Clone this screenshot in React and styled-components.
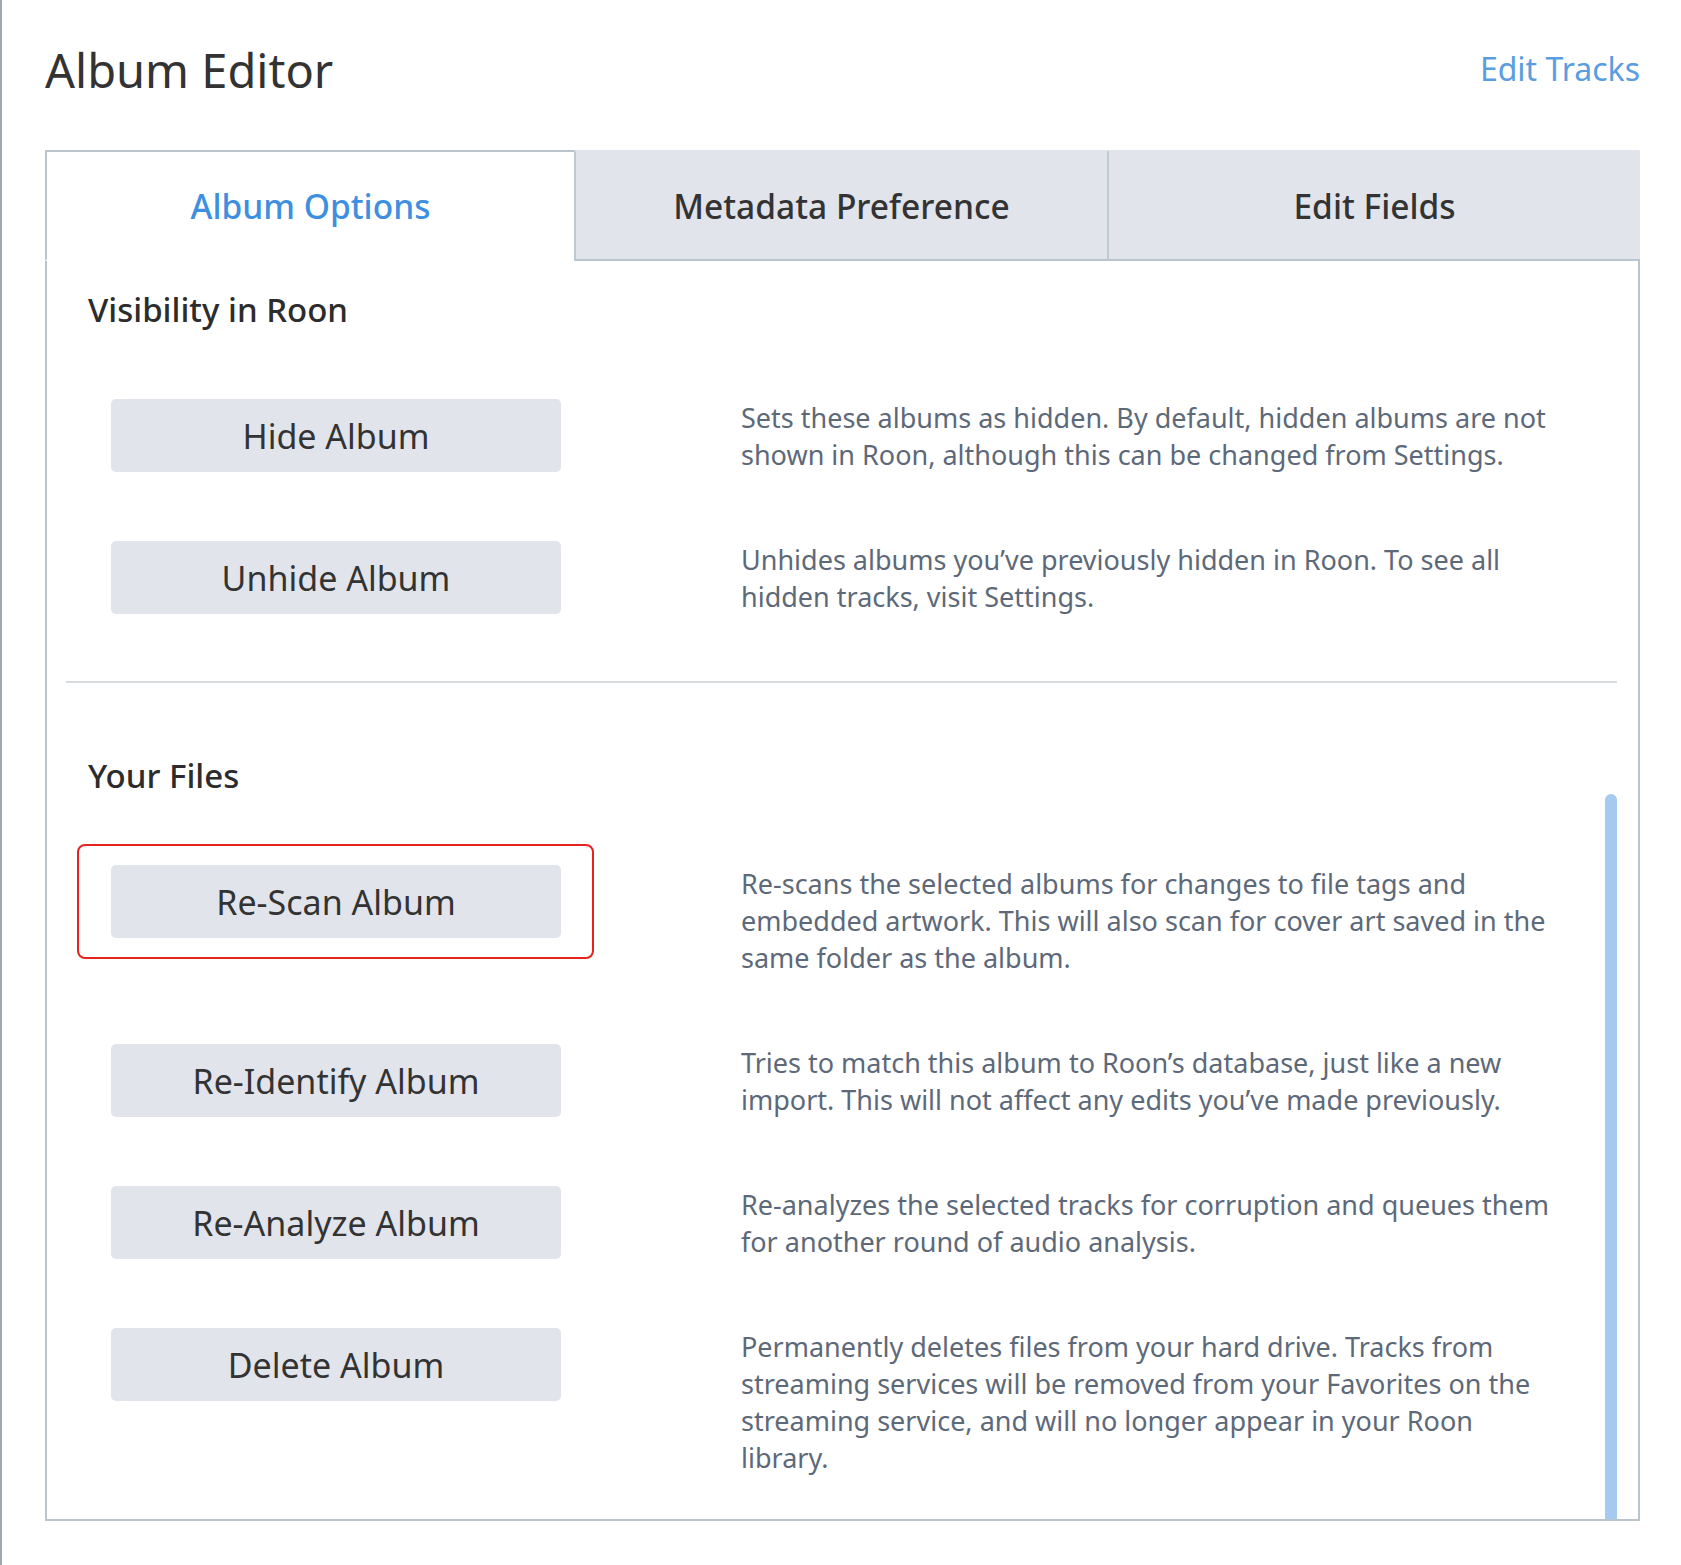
import React from 'react';
import styled, { createGlobalStyle } from 'styled-components';

const GlobalStyle = createGlobalStyle`
  html, body {
    margin: 0;
    padding: 0;
    background: #ffffff;
  }
  body {
    font-family: "Noto Sans", "Open Sans", sans-serif;
    color: #333333;
  }
`;

const tabs = ['Album Options', 'Metadata Preference', 'Edit Fields'];

const sections = [
  {
    title: 'Visibility in Roon',
    rows: [
      {
        label: 'Hide Album',
        text: 'Sets these albums as hidden. By default, hidden albums are not shown in Roon, although this can be changed from Settings.',
      },
      {
        label: 'Unhide Album',
        text: 'Unhides albums you’ve previously hidden in Roon. To see all hidden tracks, visit Settings.',
      },
    ],
  },
  {
    title: 'Your Files',
    rows: [
      {
        label: 'Re-Scan Album',
        marked: true,
        text: 'Re-scans the selected albums for changes to file tags and embedded artwork. This will also scan for cover art saved in the same folder as the album.',
      },
      {
        label: 'Re-Identify Album',
        text: 'Tries to match this album to Roon’s database, just like a new import. This will not affect any edits you’ve made previously.',
      },
      {
        label: 'Re-Analyze Album',
        text: 'Re-analyzes the selected tracks for corruption and queues them for another round of audio analysis.',
      },
      {
        label: 'Delete Album',
        text: 'Permanently deletes files from your hard drive. Tracks from streaming services will be removed from your Favorites on the streaming service, and will no longer appear in your Roon library.',
      },
    ],
  },
];

export default function App() {
  return (
    <>
      <GlobalStyle />
      <Page>
        <Header>
          <Title>Album Editor</Title>
          <HeaderLink>Edit Tracks</HeaderLink>
        </Header>
        <Card>
          <TabBar>
            {tabs.map((t, i) => (
              <Tab key={t} $active={i === 0} $first={i === 0}>
                {t}
              </Tab>
            ))}
          </TabBar>
          <Body>
            {sections.map((s, i) => (
              <React.Fragment key={s.title}>
                {i > 0 && <Divider />}
                <Section>
                  <SectionTitle>{s.title}</SectionTitle>
                  <Rows>
                    {s.rows.map((r) => (
                      <Row key={r.label}>
                        <ActionButton $marked={r.marked}>{r.label}</ActionButton>
                        <Description>{r.text}</Description>
                      </Row>
                    ))}
                  </Rows>
                </Section>
              </React.Fragment>
            ))}
            <ScrollThumb />
          </Body>
        </Card>
      </Page>
    </>
  );
}

const Page = styled.div`
  min-height: 1565px;
  box-sizing: border-box;
  border-left: 2px solid #9ea8b3;
  padding: 40px 41px 40px 43px;
`;

const Header = styled.header`
  display: flex;
  justify-content: space-between;
  align-items: flex-start;
  margin-bottom: 50px;
`;

const Title = styled.h1`
  margin: 0;
  font-size: 47px;
  line-height: 60px;
  font-weight: 400;
  color: #333333;
`;

const HeaderLink = styled.a`
  font-size: 32px;
  line-height: 58px;
  color: #5a9de0;
  cursor: pointer;
`;

const Card = styled.div`
  border: 2px solid #b9c4cf;
  border-top: none;
  border-radius: 3px 3px 0 0;
`;

const TabBar = styled.div`
  display: grid;
  grid-template-columns: 529px 1fr 1fr;
  margin-left: -2px;
  margin-right: -2px;
`;

const Tab = styled.div`
  height: 111px;
  box-sizing: border-box;
  display: flex;
  align-items: center;
  justify-content: center;
  font-size: 33.5px;
  font-weight: 500;
  background: ${(p) => (p.$active ? '#ffffff' : '#e1e4eb')};
  color: ${(p) => (p.$active ? '#3f8fe0' : '#333333')};
  border-top: 2px solid ${(p) => (p.$active ? '#b9c4cf' : '#e1e4eb')};
  border-left: 2px solid ${(p) => (p.$first ? '#b9c4cf' : '#bccad6')};
  border-bottom: 2px solid ${(p) => (p.$active ? 'transparent' : '#b9c4cf')};
  &:last-child {
    border-top-right-radius: 3px;
  }
`;

const Body = styled.div`
  position: relative;
  padding: 29px 21px 43px 19px;
`;

const Section = styled.section`
  padding-left: 22px;
`;

const SectionTitle = styled.h2`
  margin: 0 0 69px 0;
  font-size: 33px;
  line-height: 40px;
  font-weight: 500;
  color: #2c2c2c;
`;

const Rows = styled.div`
  display: flex;
  flex-direction: column;
  gap: 68px;
  padding-left: 23px;
`;

const Row = styled.div`
  display: flex;
  align-items: flex-start;
`;

const ActionButton = styled.button`
  position: relative;
  flex: 0 0 450px;
  height: 73px;
  border: none;
  border-radius: 5px;
  background: #e1e4eb;
  font-family: "Noto Sans", "Open Sans", sans-serif;
  font-size: 34px;
  color: #333333;
  padding: 0;
  cursor: pointer;
  ${(p) => p.$marked && `
    &::after {
      content: '';
      position: absolute;
      top: -21px;
      bottom: -21px;
      left: -34px;
      right: -33px;
      border: 2px solid #e8231c;
      border-radius: 8px;
      pointer-events: none;
    }
  `}
`;

const Description = styled.p`
  margin: 0 0 0 180px;
  max-width: 815px;
  font-size: 27px;
  line-height: 37px;
  color: #5d6979;
`;

const Divider = styled.hr`
  margin: 66px 0 73px 0;
  border: none;
  border-top: 2px solid #d9dcdf;
`;

const ScrollThumb = styled.div`
  position: absolute;
  top: 533px;
  bottom: 0;
  right: 21px;
  width: 12px;
  border-radius: 6px 6px 0 0;
  background: #a6c9f0;
`;
